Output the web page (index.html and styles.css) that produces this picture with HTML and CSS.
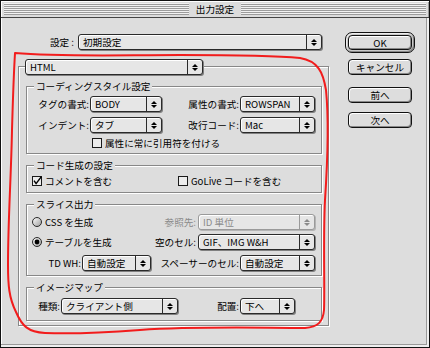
FILE: index.html
```html
<!DOCTYPE html>
<html lang="ja">
<head>
<meta charset="utf-8">
<title>出力設定</title>
<link rel="stylesheet" href="styles.css">
</head>
<body>
<svg class="defs" width="0" height="0" aria-hidden="true">
  <defs>
    <linearGradient id="radioFill" x1="0" y1="0" x2="1" y2="1">
      <stop offset="0" stop-color="#ffffff"/>
      <stop offset="1" stop-color="#9a9a9a"/>
    </linearGradient>
  </defs>
</svg>
<div class="window">
  <div class="titlebar">
    <span class="stripes"></span>
    <span class="title">出力設定</span>
    <span class="stripes"></span>
  </div>
  <div class="content">
    <div class="main">
      <div class="setting-row">
        <span class="setting-label">設定 :</span>
        <div class="popup setting-popup"><span class="popup-text">初期設定</span><span class="popup-arrows"></span></div>
      </div>

      <div class="tabbox">
        <div class="popup tab-popup"><span class="popup-text">HTML</span><span class="popup-arrows"></span></div>

        <div class="group group-coding">
          <div class="group-title">コーディングスタイル設定</div>
          <div class="grid-row coding-grid mt3">
            <span class="lbl">タグの書式:</span>
            <div class="popup"><span class="popup-text">BODY</span><span class="popup-arrows"></span></div>
            <span class="lbl">属性の書式:</span>
            <div class="popup"><span class="popup-text">ROWSPAN</span><span class="popup-arrows"></span></div>
          </div>
          <div class="grid-row coding-grid mt5">
            <span class="lbl">インデント:</span>
            <div class="popup"><span class="popup-text">タブ</span><span class="popup-arrows"></span></div>
            <span class="lbl">改行コード:</span>
            <div class="popup"><span class="popup-text">Mac</span><span class="popup-arrows"></span></div>
          </div>
          <div class="check-row quote-row mt3">
            <span class="check">
              <svg class="checkbox" viewBox="0 0 10 10"><rect x=".5" y=".5" width="9" height="9" fill="#ececec" stroke="#1a1a1a"/></svg>
              <span>属性に常に引用符を付ける</span>
            </span>
          </div>
        </div>

        <div class="group group-code">
          <div class="group-title">コード生成の設定</div>
          <div class="check-row code-grid mt2">
            <span class="check first-check">
              <svg class="checkbox" viewBox="0 0 10 10"><rect x=".5" y=".5" width="9" height="9" fill="#ececec" stroke="#1a1a1a"/><path d="M2 4.6 L4.1 7.6 L9.4 0.6" fill="none" stroke="#000" stroke-width="1.5"/></svg>
              <span>コメントを含む</span>
            </span>
            <span class="check">
              <svg class="checkbox" viewBox="0 0 10 10"><rect x=".5" y=".5" width="9" height="9" fill="#ececec" stroke="#1a1a1a"/></svg>
              <span>GoLive コードを含む</span>
            </span>
          </div>
        </div>

        <div class="group group-slice">
          <div class="group-title">スライス出力</div>
          <div class="grid-row slice-grid mt3">
            <span class="radio-item">
              <svg class="radio" viewBox="0 0 10 10"><circle cx="5" cy="5" r="4.5" fill="url(#radioFill)" stroke="#2a2a2a"/></svg>
              <span>CSS を生成</span>
            </span>
            <span class="lbl disabled-text">参照先:</span>
            <div class="popup disabled"><span class="popup-text">ID 単位</span><span class="popup-arrows"></span></div>
          </div>
          <div class="grid-row slice-grid mt4">
            <span class="radio-item">
              <svg class="radio" viewBox="0 0 10 10"><circle cx="5" cy="5" r="4.5" fill="url(#radioFill)" stroke="#2a2a2a"/><circle cx="5" cy="5" r="2.4" fill="#000"/></svg>
              <span>テーブルを生成</span>
            </span>
            <span class="lbl">空のセル:</span>
            <div class="popup"><span class="popup-text">GIF、IMG W&amp;H</span><span class="popup-arrows"></span></div>
          </div>
          <div class="grid-row td-grid mt5">
            <span class="lbl">TD WH:</span>
            <div class="popup"><span class="popup-text">自動設定</span><span class="popup-arrows"></span></div>
            <span class="lbl">スペーサーのセル:</span>
            <div class="popup"><span class="popup-text">自動設定</span><span class="popup-arrows"></span></div>
          </div>
        </div>

        <div class="group group-map">
          <div class="group-title">イメージマップ</div>
          <div class="grid-row map-grid mt4">
            <span class="lbl">種類:</span>
            <div class="popup"><span class="popup-text">クライアント側</span><span class="popup-arrows"></span></div>
            <span class="lbl">配置:</span>
            <div class="popup"><span class="popup-text">下へ</span><span class="popup-arrows"></span></div>
          </div>
        </div>
      </div>
    </div>

    <div class="buttons">
      <div class="btn-ring"><button class="btn" type="button">OK</button></div>
      <button class="btn btn-cancel" type="button">キャンセル</button>
      <button class="btn btn-prev" type="button">前へ</button>
      <button class="btn btn-next" type="button">次へ</button>
    </div>
  </div>
</div>
<svg class="annotation" width="430" height="348" viewBox="0 0 430 348" aria-hidden="true">
  <path d="M15,53 C60,57 120,55 180,55 C240,55 280,56 300,58 C318,61 323,72 326,90 C329,120 327,170 325,200 C323,240 325,290 324,310 C323,322 318,327 305,328 C260,328 200,326 140,330 C100,333 70,334 45,333 C28,332 22,326 16,312 C9,298 8,285 8,265 C8,220 11,180 12,130 C13,95 14,70 15,53" fill="none" stroke="#f21c1c" stroke-width="2" stroke-linecap="round" stroke-linejoin="round"/>
</svg>
</body>
</html>
```

FILE: styles.css
```css
* { box-sizing: border-box; }

html, body {
  margin: 0;
  padding: 0;
}

body {
  position: relative;
  width: 430px;
  height: 348px;
  overflow: hidden;
  background: #dddddd;
  color: #000;
  font-family: "Noto Sans CJK JP", "Liberation Sans", sans-serif;
  font-size: 9.6px;
}

.defs {
  position: absolute;
  width: 0;
  height: 0;
}

.window {
  width: 430px;
  height: 348px;
  border: 1px solid #111;
  background: #dddddd;
  display: flex;
  flex-direction: column;
}

/* title bar */
.titlebar {
  height: 17px;
  flex: none;
  display: flex;
  align-items: center;
  padding: 0 3px;
  border-bottom: 1px solid #444;
  background: #dcdcdc;
  box-shadow: inset 1px 1px 0 #fff, inset -1px 0 0 #999;
}

.stripes {
  flex: 1;
  height: 12px;
  background: repeating-linear-gradient(to bottom, #f2f2f2 0 1px, #9c9c9c 1px 2px);
}

.title {
  padding: 0 7px;
  line-height: 14px;
}

/* content */
.content {
  flex: 1;
  display: flex;
  align-items: flex-start;
  gap: 16px;
  padding-left: 17px;
  box-shadow: inset -2px -2px 0 #efefef, inset -3px -3px 0 #9a9a9a, inset 1px 0 0 #fff;
}

.main {
  width: 311px;
  margin-top: 16px;
}

.setting-row {
  display: flex;
  align-items: center;
  gap: 4px;
  height: 16px;
}

.setting-label {
  width: 56px;
  text-align: right;
  white-space: nowrap;
}

.setting-popup { width: 244px; }

/* popup menu */
.popup {
  display: flex;
  height: 16px;
  border: 1px solid #2a2a2a;
  border-radius: 3px;
  background: #e6e6e6;
  box-shadow: 1px 1px 0 #808080, inset 1px 1px 0 #fff;
}

.popup-text {
  flex: 1;
  min-width: 0;
  padding-left: 4px;
  line-height: 14px;
  white-space: nowrap;
  overflow: hidden;
}

.popup-arrows {
  flex: none;
  width: 15px;
  border-left: 1px solid #2a2a2a;
  display: flex;
  flex-direction: column;
  align-items: center;
  justify-content: center;
  gap: 1px;
}

.popup-arrows::before,
.popup-arrows::after {
  content: "";
  width: 0;
  height: 0;
  border-left: 3px solid transparent;
  border-right: 3px solid transparent;
}

.popup-arrows::before { border-bottom: 3px solid #000; }
.popup-arrows::after { border-top: 3px solid #000; }

.popup.disabled {
  border-color: #9a9a9a;
  color: #8a8a8a;
  box-shadow: 1px 1px 0 #b4b4b4, inset 1px 1px 0 #fff;
}

.popup.disabled .popup-arrows { border-left-color: #9a9a9a; }
.popup.disabled .popup-arrows::before { border-bottom-color: #8a8a8a; }
.popup.disabled .popup-arrows::after { border-top-color: #8a8a8a; }

.disabled-text { color: #8a8a8a; }

/* tab box and group boxes */
.tabbox {
  margin-top: 16px;
  border: 1px solid #888;
  box-shadow: 1px 1px 0 #fff, inset 1px 1px 0 #fff;
  padding-bottom: 4px;
}

.tab-popup {
  width: 178px;
  margin: -8px 0 0 6px;
}

.group {
  margin: 11px 6px 0 7px;
  padding-right: 6px;
  border: 1px solid #888;
  box-shadow: 1px 1px 0 #fff, inset 1px 1px 0 #fff;
}

.group-coding { padding-bottom: 3px; }
.group-code { padding-bottom: 4px; }
.group-slice { padding-bottom: 4px; }
.group-map { padding-bottom: 6px; }

.group-title {
  display: table;
  margin: -8px 0 0 7px;
  padding: 0 2px;
  line-height: 14px;
  background: #dddddd;
  white-space: nowrap;
}

.mt2 { margin-top: 2px; }
.mt3 { margin-top: 3px; }
.mt4 { margin-top: 4px; }
.mt5 { margin-top: 5px; }

.grid-row {
  display: grid;
  align-items: center;
  height: 16px;
}

.coding-grid { grid-template-columns: 63px 72px 78px 75px; }
.slice-grid { grid-template-columns: 1fr auto 117px; column-gap: 1px; }
.td-grid { grid-template-columns: 55px 69px 89px 75px; }
.map-grid { grid-template-columns: 34px 117px 62px 55px; }

.lbl {
  text-align: right;
  padding-right: 1px;
  white-space: nowrap;
  line-height: 14px;
}

/* checkboxes and radios */
.check-row {
  height: 14px;
  display: flex;
  align-items: center;
}

.quote-row { padding-left: 65px; }

.code-grid {
  display: grid;
  grid-template-columns: 151px 1fr;
}

.check,
.radio-item {
  display: flex;
  align-items: center;
  gap: 3px;
  line-height: 14px;
  white-space: nowrap;
}

.first-check,
.radio-item { padding-left: 5px; }

.checkbox {
  width: 10px;
  height: 10px;
  flex: none;
  overflow: visible;
}

.radio {
  width: 10px;
  height: 10px;
  flex: none;
}

/* buttons */
.buttons {
  width: 70px;
  margin-top: 14px;
  display: flex;
  flex-direction: column;
  align-items: center;
}

.btn-ring {
  width: 70px;
  height: 21px;
  padding: 2px;
  border: 1px solid #111;
  border-radius: 7px;
  background: #c8c8c8;
  box-shadow: inset 1px 1px 0 #eee, inset -1px -1px 0 #888;
}

.btn {
  appearance: none;
  display: flex;
  align-items: center;
  justify-content: center;
  width: 64px;
  height: 16px;
  margin: 0;
  padding: 0;
  border: 1px solid #111;
  border-radius: 4px;
  background: #dddddd;
  box-shadow: inset 1px 1px 0 #fff, inset -1px -1px 0 #888;
  font: inherit;
  color: #000;
  line-height: 14px;
}

.btn-ring .btn {
  width: 100%;
  height: 15px;
}

.btn-cancel { margin-top: 6px; }
.btn-prev { margin-top: 12px; }
.btn-next { margin-top: 9px; }

/* hand-drawn annotation */
.annotation {
  position: absolute;
  left: 0;
  top: 0;
  pointer-events: none;
}
```
